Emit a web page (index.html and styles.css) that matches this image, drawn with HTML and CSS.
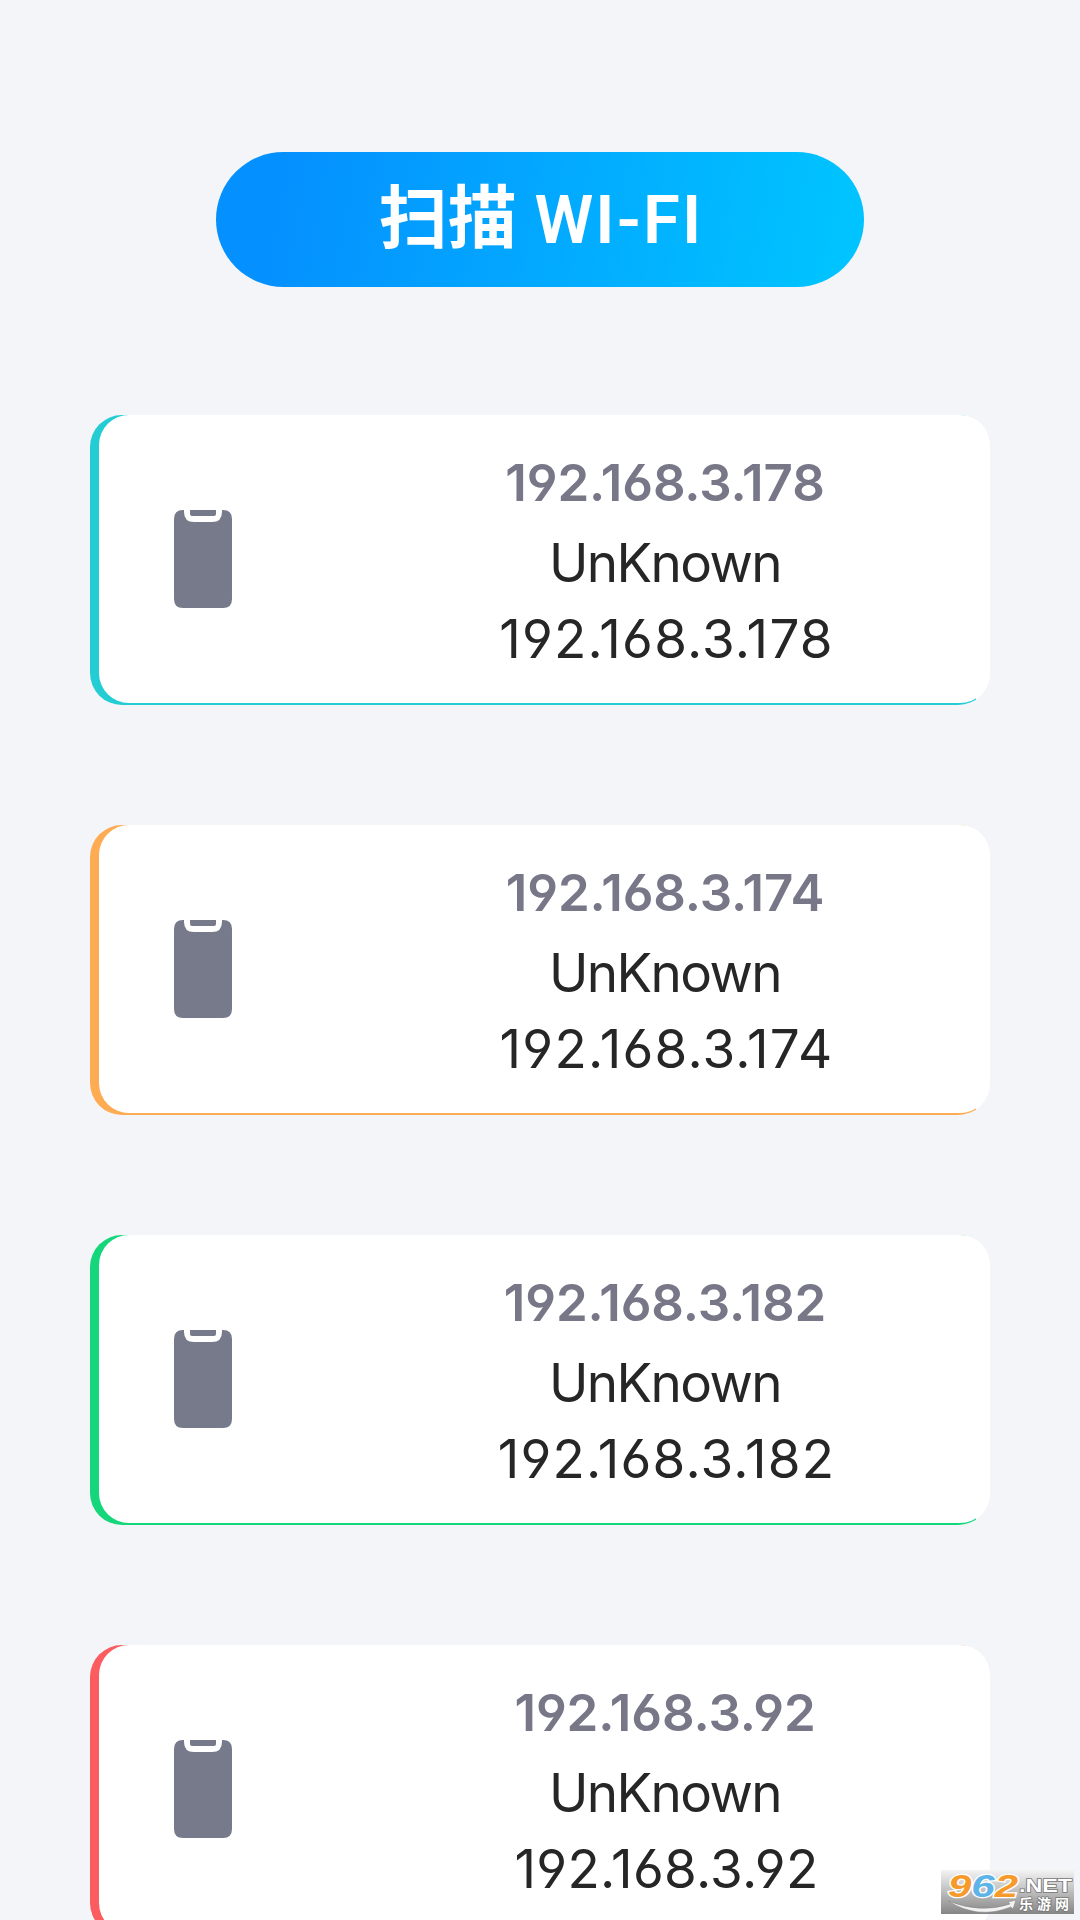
FILE: index.html
```
<!DOCTYPE html>
<html lang="zh-CN">

<head>
    <meta charset="UTF-8">
    <title>扫描 WI-FI</title>
    <link rel="stylesheet" href="styles.css">
</head>

<body>
    <button class="scan-btn">扫描 <span>WI-FI</span></button>

    <div class="device-list">
        <div class="device cyan">
            <div class="device-body">
                <svg class="phone" viewBox="0 0 58 98">
                    <path d="M9 0h1v2q0 10 10 10h18q10 0 10-10V0h1q9 0 9 9v80q0 9-9 9H9q-9 0-9-9V9q0-9 9-9z" />
                    <path d="M16 0h26v4q0 2-2 2H18q-2 0-2-2z" />
                </svg>
                <div class="info">
                    <h2>192.168.3.178</h2>
                    <p>UnKnown</p>
                    <p class="ip">192.168.3.178</p>
                </div>
            </div>
        </div>

        <div class="device orange">
            <div class="device-body">
                <svg class="phone" viewBox="0 0 58 98">
                    <path d="M9 0h1v2q0 10 10 10h18q10 0 10-10V0h1q9 0 9 9v80q0 9-9 9H9q-9 0-9-9V9q0-9 9-9z" />
                    <path d="M16 0h26v4q0 2-2 2H18q-2 0-2-2z" />
                </svg>
                <div class="info">
                    <h2>192.168.3.174</h2>
                    <p>UnKnown</p>
                    <p class="ip">192.168.3.174</p>
                </div>
            </div>
        </div>

        <div class="device green">
            <div class="device-body">
                <svg class="phone" viewBox="0 0 58 98">
                    <path d="M9 0h1v2q0 10 10 10h18q10 0 10-10V0h1q9 0 9 9v80q0 9-9 9H9q-9 0-9-9V9q0-9 9-9z" />
                    <path d="M16 0h26v4q0 2-2 2H18q-2 0-2-2z" />
                </svg>
                <div class="info">
                    <h2>192.168.3.182</h2>
                    <p>UnKnown</p>
                    <p class="ip">192.168.3.182</p>
                </div>
            </div>
        </div>

        <div class="device red">
            <div class="device-body">
                <svg class="phone" viewBox="0 0 58 98">
                    <path d="M9 0h1v2q0 10 10 10h18q10 0 10-10V0h1q9 0 9 9v80q0 9-9 9H9q-9 0-9-9V9q0-9 9-9z" />
                    <path d="M16 0h26v4q0 2-2 2H18q-2 0-2-2z" />
                </svg>
                <div class="info">
                    <h2>192.168.3.92</h2>
                    <p>UnKnown</p>
                    <p class="ip short">192.168.3.92</p>
                </div>
            </div>
        </div>
    </div>

    <svg class="watermark" viewBox="0 0 133 44">
        <defs>
            <linearGradient id="wmBg" x1="0" y1="0" x2="0" y2="1">
                <stop offset="0" stop-color="#f4f4f5" />
                <stop offset="0.5" stop-color="#bdbdbd" />
                <stop offset="1" stop-color="#858585" />
            </linearGradient>
        </defs>
        <rect width="133" height="44" fill="url(#wmBg)" />
        <path class="swoosh" d="M7 31q33 13 62 3l-2-2 8-2-3 9-2-2q-33 13-63-6z" />
        <text class="wm-num" x="7" y="27" textLength="70" lengthAdjust="spacingAndGlyphs"><tspan fill="#f79a2c">9</tspan><tspan fill="#5eb3e8">6</tspan><tspan fill="#f79a2c">2</tspan></text>
        <text class="wm-net" x="78" y="22" textLength="53" lengthAdjust="spacingAndGlyphs">.NET</text>
        <text class="wm-cn" x="78" y="39" textLength="50">乐游网</text>
    </svg>
</body>

</html>
```
FILE: styles.css
```
* {
    box-sizing: border-box;
}

body {
    margin: 0;
    height: 1920px;
    padding-top: 152px;
    overflow: hidden;
    background-color: #f3f5f9;
    font-family: Inter, "Noto Sans CJK SC", sans-serif;
}

.scan-btn {
    display: block;
    width: 648px;
    height: 135px;
    margin: 0 auto;
    padding: 0 0 6px 2px;
    border: none;
    border-radius: 68px;
    background: linear-gradient(100deg, #0590ff 10%, #00c3ff 95%);
    color: #fff;
    font-family: "Noto Sans CJK SC", sans-serif;
    font-size: 69px;
    font-weight: 700;
    line-height: 1;
}

.scan-btn span {
    display: inline-block;
    margin-left: 2px;
    font-family: Roboto, sans-serif;
    font-size: 67px;
    font-weight: 600;
    letter-spacing: 2px;
}

.device-list {
    display: flex;
    flex-direction: column;
    gap: 120px;
    margin: 128px 90px 0;
}

/* the accent shows as a left and bottom edge behind the white body */
.device {
    flex: none;
    height: 290px;
    padding: 0 0 2px 9px;
    border-radius: 32px;
    background: linear-gradient(to right, var(--accent) calc(100% - 14px), #fff 0);
}

.cyan {
    --accent: #24cdd3;
}

.orange {
    --accent: #fdac54;
}

.green {
    --accent: #16d67c;
}

.red {
    --accent: #fb5c5f;
}

.device-body {
    display: flex;
    height: 100%;
    padding-left: 75px;
    border-radius: 30px;
    background-color: #fff;
}

.phone {
    width: 58px;
    height: 98px;
    margin-top: 95px;
    fill: #767a8b;
}

.info {
    flex: 1;
    padding: 30px 0 0 108px;
    text-align: center;
    white-space: nowrap;
    font-feature-settings: "cv03", "cv04";
}

.info h2 {
    margin: 0;
    color: #777788;
    font-size: 51px;
    font-weight: 600;
    letter-spacing: -0.1px;
    line-height: 76px;
}

.info p {
    margin: 4px 0 0;
    color: #262626;
    font-size: 53px;
    font-weight: 370;
    letter-spacing: -1.6px;
    line-height: 76px;
}

.info .ip {
    margin: 0;
    padding-left: 3px;
    letter-spacing: 1.2px;
}

.info .short {
    letter-spacing: 0.3px;
}

.watermark {
    position: absolute;
    left: 941px;
    top: 1870px;
    width: 133px;
    height: 44px;
    overflow: visible;
}

.swoosh {
    fill: #f2f2f2;
    stroke: #8a8a8a;
    stroke-width: 0.6;
}

.wm-num {
    font: italic 700 32px "Liberation Sans", sans-serif;
    stroke: #fff;
    stroke-width: 2.5px;
    paint-order: stroke;
}

.wm-net {
    font: 700 19px "Liberation Sans", sans-serif;
    fill: #fff;
    stroke: #777;
    stroke-width: 1.5px;
    paint-order: stroke;
}

.wm-cn {
    font: 700 14px "Noto Sans CJK SC", sans-serif;
    fill: #fff;
    stroke: #777;
    stroke-width: 1.5px;
    paint-order: stroke;
}
```
